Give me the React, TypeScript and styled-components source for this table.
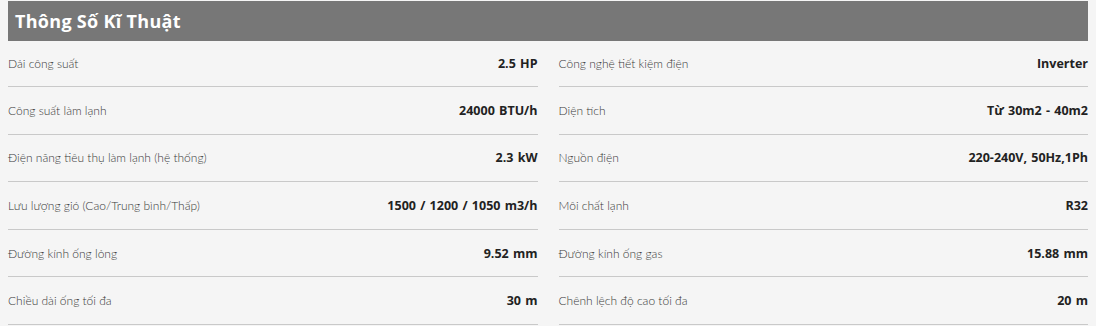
import React from "react";
import styled, { createGlobalStyle } from "styled-components";

const GlobalStyle = createGlobalStyle`
  html, body {
    margin: 0;
    padding: 0;
    background: #f5f5f5;
  }
  body {
    font-family: "Lato", "Open Sans", "Noto Sans", sans-serif;
  }
`;

const Wrapper = styled.div`
  padding: 1px 8px 0;
`;

const Header = styled.div`
  height: 40px;
  background-color: #777777;
  display: flex;
  align-items: center;
  padding-left: 7px;
  color: #ffffff;
  font-family: "Open Sans", "Noto Sans", sans-serif;
  font-size: 18px;
  font-weight: 700;
  letter-spacing: 0.3px;
`;

const Grid = styled.div`
  display: grid;
  grid-template-columns: 1fr 1fr;
  column-gap: 21px;
`;

const Row = styled.div`
  height: 47.6px;
  border-bottom: 1px solid #c9c9c9;
  display: flex;
  align-items: center;
  justify-content: space-between;
  box-sizing: border-box;
  &:nth-child(-n + 2) {
    height: 46px;
  }
`;

const Label = styled.span`
  font-size: 12px;
  font-weight: 300;
  color: #3a3a3a;
`;

const Value = styled.span`
  font-family: "Open Sans", "Noto Sans", sans-serif;
  font-size: 12.5px;
  font-weight: 700;
  color: #222222;
  word-spacing: 1px;
`;

const specs: [string, string][] = [
  ["Dải công suất", "2.5 HP"],
  ["Công nghệ tiết kiệm điện", "Inverter"],
  ["Công suất làm lạnh", "24000 BTU/h"],
  ["Diện tích", "Từ 30m2 - 40m2"],
  ["Điện năng tiêu thụ làm lạnh (hệ thống)", "2.3 kW"],
  ["Nguồn điện", "220-240V, 50Hz,1Ph"],
  ["Lưu lượng gió (Cao/Trung bình/Thấp)", "1500 / 1200 / 1050 m3/h"],
  ["Môi chất lạnh", "R32"],
  ["Đường kính ống lỏng", "9.52 mm"],
  ["Đường kính ống gas", "15.88 mm"],
  ["Chiều dài ống tối đa", "30 m"],
  ["Chênh lệch độ cao tối đa", "20 m"],
];

const App: React.FC = () => {
  return (
    <>
      <GlobalStyle />
      <Wrapper>
        <Header>Thông Số Kĩ Thuật</Header>
        <Grid>
          {specs.map(([label, value]) => (
            <Row key={label}>
              <Label>{label}</Label>
              <Value>{value}</Value>
            </Row>
          ))}
        </Grid>
      </Wrapper>
    </>
  );
};

export default App;
